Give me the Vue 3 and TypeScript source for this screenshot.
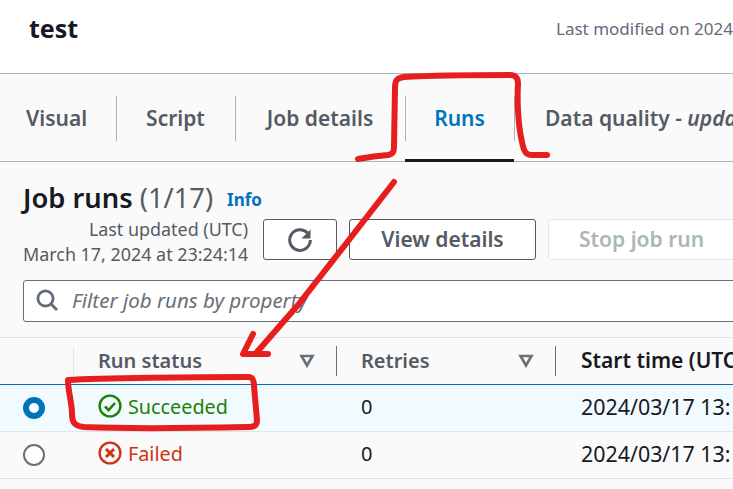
<script setup lang="ts">
interface Row { status: string; ok: boolean; retries: number; start: string }
const rows: Row[] = [
  { status: 'Succeeded', ok: true, retries: 0, start: '2024/03/17 13:' },
  { status: 'Failed', ok: false, retries: 0, start: '2024/03/17 13:' },
]
const tabs = [
  { label: 'Visual', cls: 'visual' },
  { label: 'Script', cls: 'script' },
  { label: 'Job details', cls: 'details' },
  { label: 'Runs', cls: 'runs' },
]
</script>

<template>
  <div class="page">
    <header class="head">
      <h1>test</h1>
      <span class="modified">Last modified on 2024/03/17</span>
    </header>

    <nav class="tabs">
      <div v-for="t in tabs" :key="t.cls" class="tab" :class="t.cls">
        <span>{{ t.label }}</span>
      </div>
      <div class="tab last"><span>Data quality - <em>updated</em></span></div>
    </nav>

    <section class="panel">
      <div class="title-row">
        <h2>Job runs <span class="count">(1/17)</span></h2>
        <a class="info">Info</a>
      </div>
      <div class="toolbar">
        <div class="updated">
          <div>Last updated (UTC)</div>
          <div>March 17, 2024 at 23:24:14</div>
        </div>
        <button class="btn icon" aria-label="Refresh">
          <svg width="26" height="26" viewBox="0 0 26 26" fill="none">
            <path d="M20.5 6A10.3 10.3 0 1 0 23.3 13" stroke="#545b64" stroke-width="3" />
            <path d="M23.5 2.5v9h-9z" fill="#545b64" />
          </svg>
        </button>
        <button class="btn view">View details</button>
        <button class="btn stop" disabled>Stop job run</button>
      </div>
      <div class="filter">
        <svg width="22" height="22" viewBox="0 0 22 22" fill="none" stroke="#5f6b7a" stroke-width="2.8">
          <circle cx="9.5" cy="9.5" r="7.6" />
          <path d="M15 15l6 6" />
        </svg>
        <span>Filter job runs by property</span>
      </div>
    </section>

    <div class="table">
      <div class="row thead">
        <div class="c-radio"></div>
        <div class="c-status th">
          <span>Run status</span>
          <svg class="sort" width="16" height="14" viewBox="0 0 16 14" fill="none" stroke="#687078" stroke-width="2.6"><path d="M2.5 2h11L8 11.5z" /></svg>
        </div>
        <div class="c-retries th">
          <span>Retries</span>
          <svg class="sort" width="16" height="14" viewBox="0 0 16 14" fill="none" stroke="#687078" stroke-width="2.6"><path d="M2.5 2h11L8 11.5z" /></svg>
        </div>
        <div class="c-start th strong">Start time (UTC)</div>
      </div>
      <div v-for="r in rows" :key="r.status" class="row body" :class="{ selected: r.ok }">
        <div class="c-radio"><span class="radio" :class="{ on: r.ok }"></span></div>
        <div class="c-status status" :class="r.ok ? 'ok' : 'bad'">
          <svg width="24" height="24" viewBox="0 0 24 24" fill="none" stroke="currentColor" stroke-width="2.4">
            <circle cx="12" cy="12" r="10.4" />
            <path v-if="r.ok" d="M7 12.5l3.6 3.6L17 9" stroke-width="2.6" />
            <path v-else d="M8 8l8 8M16 8l-8 8" stroke-width="3" />
          </svg>
          <span>{{ r.status }}</span>
        </div>
        <div class="c-retries cell">{{ r.retries }}</div>
        <div class="c-start cell date">{{ r.start }}</div>
      </div>
    </div>

    <svg class="marks" width="733" height="489" viewBox="0 0 733 489" fill="none" stroke="#e61e1e" stroke-width="6" stroke-linecap="round" stroke-linejoin="round">
      <path d="M358 159C368 157 380 156 388 155C393 154 394 152 394 146L395 88C395 80 397 78 404 77C440 75 480 75 510 75C516 75 518 78 518 84C517 100 518 125 522 142C524 152 526 155 532 155L547 155" />
      <path d="M394 182L345 245L298 305L257 352" />
      <path d="M253 334L243 354L268 354" />
      <path d="M68 380C100 378 200 377 248 377C253 377 254 380 254 386L257 420C257 426 254 427 248 427C200 428 130 429 84 427C74 426 72 422 72 414C72 402 68 392 68 380Z" />
    </svg>
  </div>
</template>

<style>
html, body { margin: 0; background: #fff; }
</style>

<style scoped>
.page {
  position: relative;
  width: 733px;
  height: 489px;
  overflow: hidden;
  background: #fafafa;
  color: #16191f;
  font-family: "Noto Sans", "Open Sans", sans-serif;
  white-space: nowrap;
}
.head {
  height: 74px;
  box-sizing: border-box;
  background: #fff;
  border-bottom: 1px solid #aab7b8;
  display: flex;
  align-items: center;
  padding: 0 0 17px 29px;
}
.head h1 {
  margin: 0;
  width: 527px;
  flex: none;
  font-size: 25px;
  font-weight: 700;
  line-height: 30px;
}
.modified {
  flex: none;
  font-size: 17px;
  color: #5f6b7a;
}
.tabs {
  height: 88px;
  box-sizing: border-box;
  display: flex;
  border-bottom: 1px solid #aab7b8;
  align-items: stretch;
}
.tab {
  position: relative;
  flex: none;
  display: flex;
  align-items: center;
  justify-content: center;
  box-sizing: border-box;
  font-size: 21px;
  font-weight: 600;
  color: #545b64;
}
.tab + .tab::before {
  content: "";
  position: absolute;
  left: 0;
  top: 22px;
  height: 45px;
  width: 1px;
  background: #aab7b8;
}
.visual { width: 116px; justify-content: flex-start; padding-left: 26px; }
.script { width: 119px; }
.details { width: 170px; }
.runs { width: 109px; color: #0073bb; }
.runs::after {
  content: "";
  position: absolute;
  left: 0;
  right: 0;
  bottom: -1px;
  height: 3px;
  background: #16191f;
}
.last { padding-left: 31px; }
.last em { font-weight: 600; }
.panel {
  padding: 19px 0 0 23px;
}
.title-row {
  display: flex;
  align-items: center;
  gap: 14px;
  height: 34px;
}
.title-row h2 {
  margin: 0;
  font-size: 27.3px;
  font-weight: 600;
  line-height: 34px;
}
.count {
  font-weight: 400;
  color: #545b64;
}
.info {
  font-size: 17px;
  font-weight: 700;
  color: #0073bb;
  padding-top: 2px;
}
.toolbar {
  display: flex;
  align-items: center;
  margin-top: 4px;
  height: 41px;
}
.updated {
  flex: none;
  width: 225px;
  margin-top: 5px;
  text-align: right;
  font-size: 17.9px;
  line-height: 25px;
  color: #545b64;
}
.btn {
  flex: none;
  box-sizing: border-box;
  height: 41px;
  border: 1px solid #545b64;
  border-radius: 3px;
  background: #fff;
  color: #545b64;
  font-family: inherit;
  font-size: 21px;
  font-weight: 600;
  display: flex;
  align-items: center;
  justify-content: center;
  padding: 0 0 2px;
}
.icon { width: 74px; margin-left: 15px; padding: 0; }
.view { width: 187px; margin-left: 12px; }
.stop {
  width: 300px;
  margin-left: 12px;
  border-color: #e1e4e8;
  color: #aab7b8;
  justify-content: flex-start;
  padding-left: 30px;
}
.filter {
  box-sizing: border-box;
  margin-top: 20px;
  width: 760px;
  height: 42px;
  background: #fff;
  border: 1px solid #687078;
  border-radius: 3px;
  display: flex;
  align-items: center;
  gap: 14px;
  padding: 0 0 2px 12px;
  font-size: 20.5px;
  font-style: italic;
  color: #687078;
}
.table {
  margin-top: 15px;
  border-top: 1px solid #e1e4e8;
  border-bottom: 1px solid #e1e4e8;
}
.row {
  display: flex;
  align-items: center;
}
.thead {
  height: 46px;
  align-items: flex-end;
}
.body {
  height: 47px;
  box-sizing: border-box;
  border-top: 1px solid #e1e4e8;
  padding-bottom: 4px;
}
.selected {
  background: #f1faff;
  border-top: 1px solid #0073bb;
  border-bottom: 1px solid #0073bb;
  height: 48px;
  margin-bottom: -1px;
}
.c-radio {
  width: 73px;
  box-sizing: border-box;
  padding: 4px 0 0 23px;
  flex: none;
  display: flex;
  align-items: center;
}
.c-status { width: 264px; flex: none; box-sizing: border-box; padding-left: 25px; }
.c-retries { width: 219px; flex: none; box-sizing: border-box; padding-left: 24px; }
.c-start { flex: none; padding-left: 25px; }
.th {
  position: relative;
  height: 38px;
  display: flex;
  align-items: center;
  font-size: 20px;
  font-weight: 600;
  color: #545b64;
  padding-bottom: 10px;
  box-sizing: border-box;
}
.c-status.th::before {
  content: "";
  position: absolute;
  left: 0;
  top: 0;
  height: 38px;
  width: 1px;
  background: #e1e4e8;
}
.c-status.th::after, .c-retries.th::after {
  content: "";
  position: absolute;
  right: 0;
  top: 0;
  height: 30px;
  width: 1px;
  background: #687078;
}
.sort { position: absolute; right: 22px; top: 8px; }
.strong { color: #16191f; font-size: 21px; }
.radio {
  box-sizing: border-box;
  width: 22px;
  height: 22px;
  border-radius: 50%;
  border: 2px solid #687078;
  background: #fff;
}
.radio.on {
  border: 6.5px solid #0073bb;
}
.status {
  display: flex;
  align-items: center;
  gap: 6px;
  font-size: 19.8px;
}
.status svg { flex: none; }
.ok { color: #1d8102; }
.bad { color: #d13212; }
.cell { font-size: 20px; color: #16191f; }
.date { font-size: 21.4px; }
.marks {
  position: absolute;
  left: 0;
  top: 0;
  pointer-events: none;
}
</style>
